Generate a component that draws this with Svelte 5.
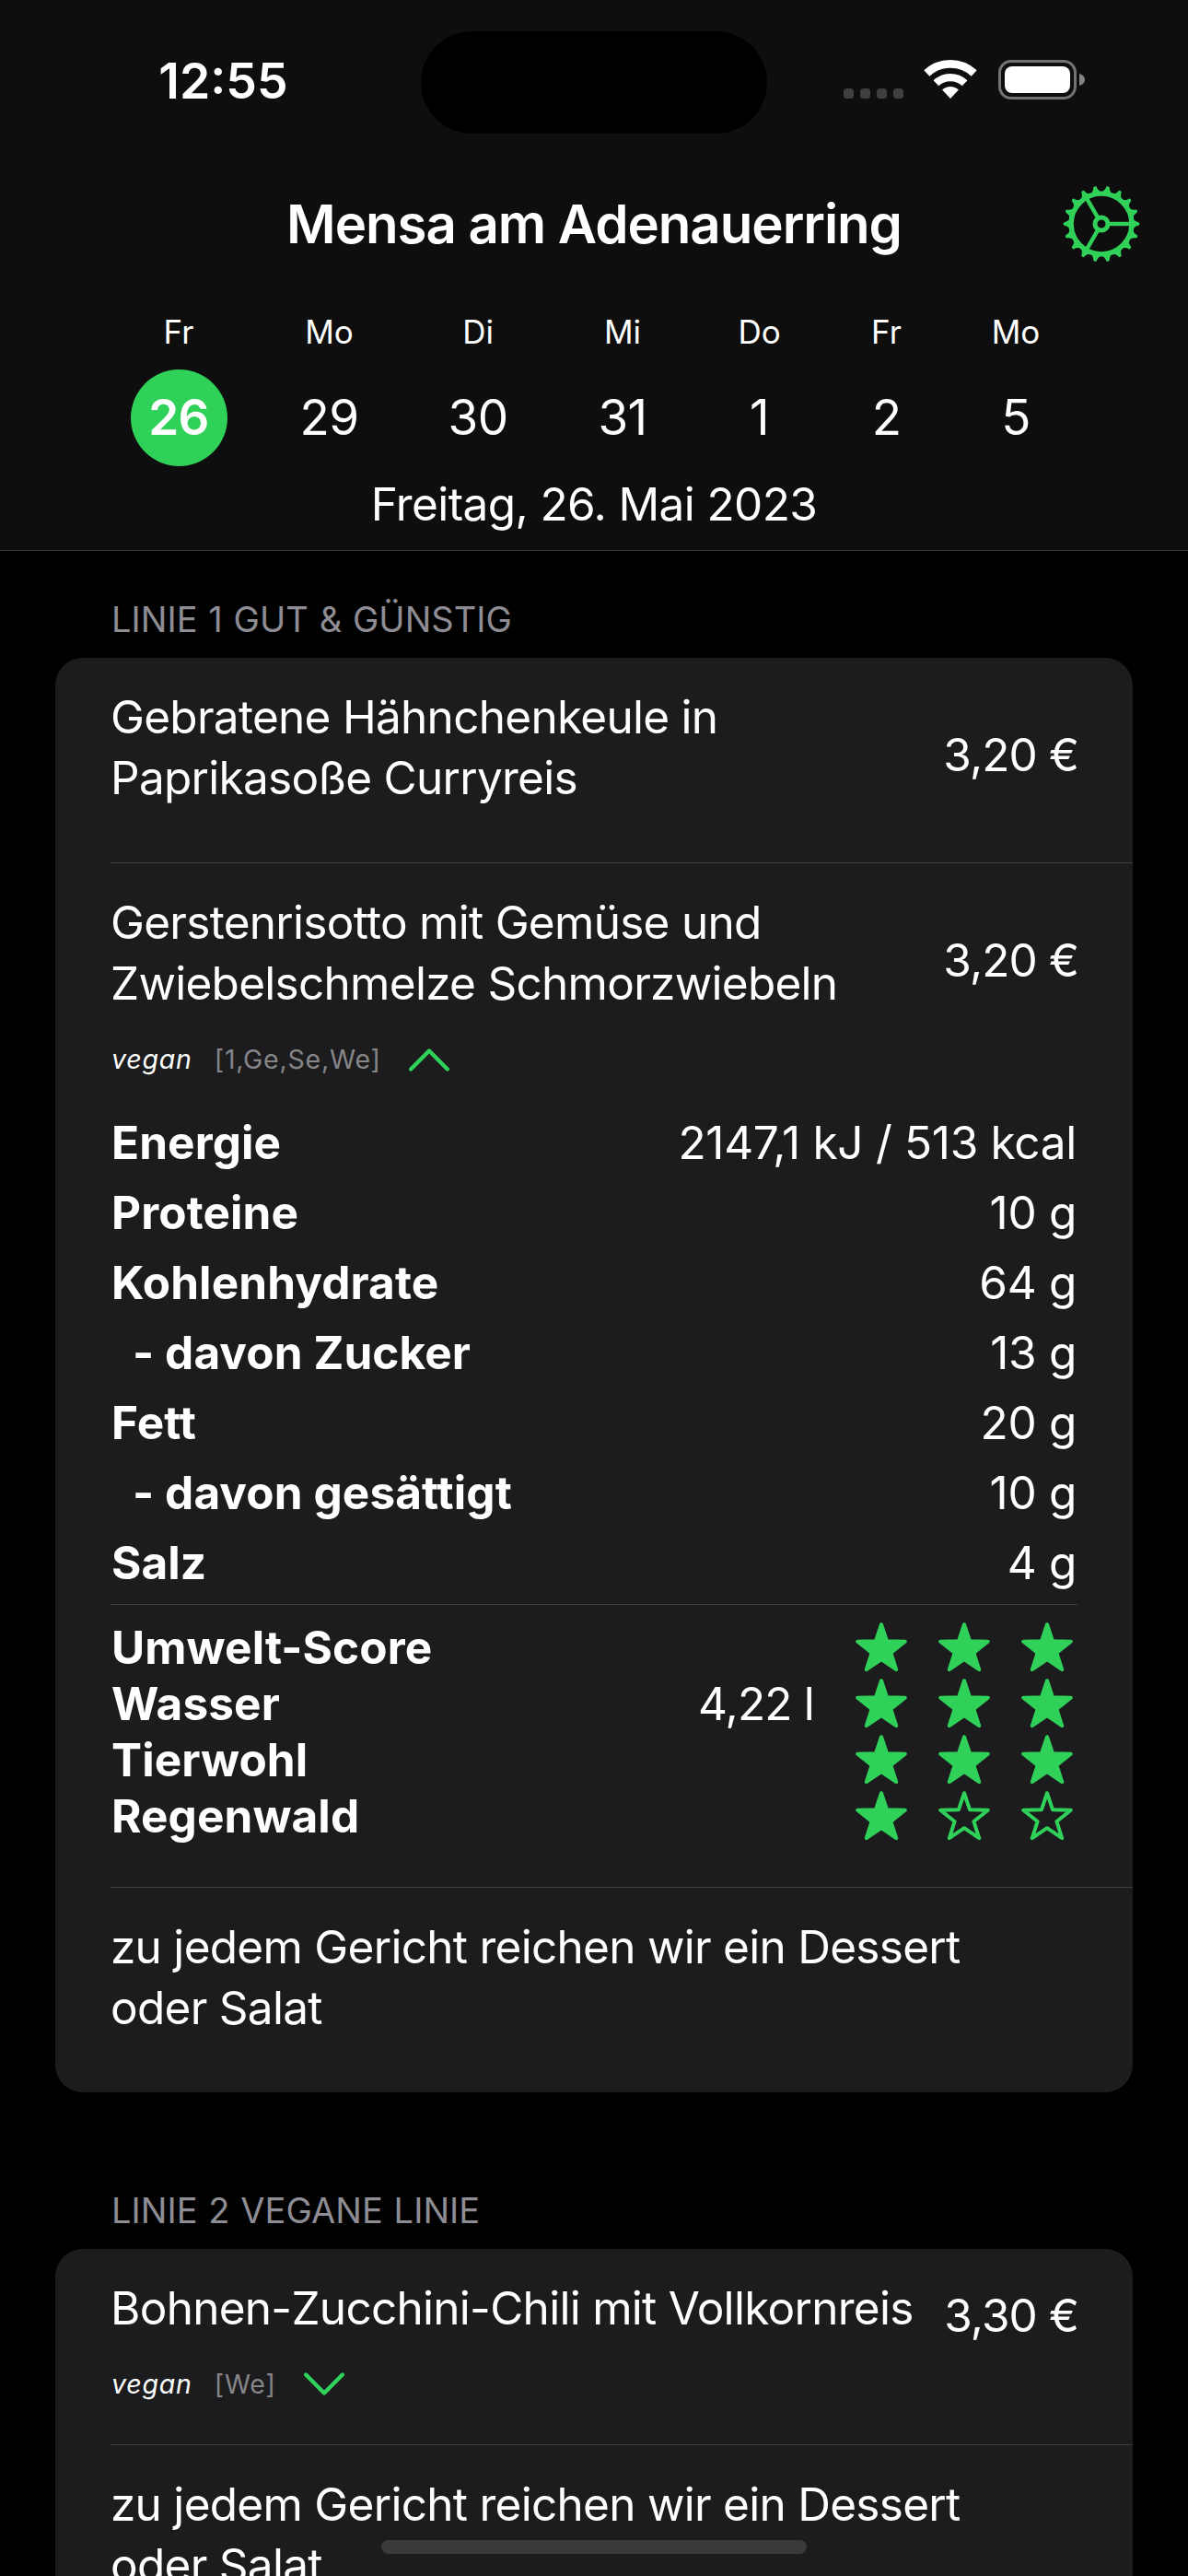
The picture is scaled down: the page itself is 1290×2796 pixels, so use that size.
<script>
  const days = [
    { name: 'Fr', num: '26', active: true },
    { name: 'Mo', num: '29' },
    { name: 'Di', num: '30' },
    { name: 'Mi', num: '31' },
    { name: 'Do', num: '1' },
    { name: 'Fr', num: '2' },
    { name: 'Mo', num: '5' }
  ];

  const note = { title: 'zu jedem Gericht reichen wir ein Dessert\noder Salat' };

  const lines = [
    {
      name: 'LINIE 1 GUT & GÜNSTIG',
      meals: [
        { title: 'Gebratene Hähnchenkeule in\nPaprikasoße Curryreis', price: '3,20 €' },
        {
          title: 'Gerstenrisotto mit Gemüse und\nZwiebelschmelze Schmorzwiebeln',
          price: '3,20 €',
          tag: 'vegan',
          allergens: '[1,Ge,Se,We]',
          open: true,
          nutrition: [
            ['Energie', '2147,1 kJ / 513 kcal'],
            ['Proteine', '10 g'],
            ['Kohlenhydrate', '64 g'],
            ['- davon Zucker', '13 g', true],
            ['Fett', '20 g'],
            ['- davon gesättigt', '10 g', true],
            ['Salz', '4 g']
          ],
          scores: [
            ['Umwelt-Score', '', 3],
            ['Wasser', '4,22 l', 3],
            ['Tierwohl', '', 3],
            ['Regenwald', '', 1]
          ]
        },
        note
      ]
    },
    {
      name: 'LINIE 2 VEGANE LINIE',
      meals: [
        {
          title: 'Bohnen-Zucchini-Chili mit Vollkornreis',
          price: '3,30 €',
          tag: 'vegan',
          allergens: '[We]'
        },
        note
      ]
    }
  ];

  const teeth = Array.from({ length: 18 }, (_, i) => i * 20);
</script>

<div class="screen">
  <header>
    <div class="status">
      <div class="time">12:55</div>
      <div class="island"></div>
      <div class="indicators">
        <div class="dots"><i></i><i></i><i></i><i></i></div>
        <svg class="wifi" viewBox="0 0 58 42" fill="none" stroke="#fff">
          <path d="M3.3 14.5A37.65 37.65 0 0 1 54.7 14.5" stroke-width="8.7" />
          <path d="M13.4 25.3A22.85 22.85 0 0 1 44.6 25.3" stroke-width="8.3" />
          <path d="M29 42L20.1 32.5A13 13 0 0 1 37.9 32.5Z" fill="#fff" stroke="none" />
        </svg>
        <svg class="battery" viewBox="0 0 94 43">
          <rect x="1.5" y="1.5" width="82" height="40" rx="12.5" fill="none" stroke="#737373" stroke-width="3" />
          <rect x="7" y="7" width="71" height="29" rx="8" fill="#fff" />
          <path d="M88 15c3.600 1 6 3.500 6 6.500s-2.400 5.500-6 6.500z" fill="#858585" />
        </svg>
      </div>
    </div>

    <div class="nav">
      <h1>Mensa am Adenauerring</h1>
      <svg class="gear" viewBox="-42 -42 84 84">
        <circle r="32.900" fill="none" stroke="#30d158" stroke-width="5.400" />
        {#each teeth as angle}
          <path
            transform="rotate({angle})"
            d="M33.500 -5.400C36 -4.200 36.800 -2.500 39.400 -2A2 2 0 0 1 39.400 2C36.800 2.500 36 4.200 33.500 5.400Z"
            fill="#30d158"
          />
        {/each}
        <g stroke="#30d158" fill="none">
          <circle r="7" stroke-width="5" />
          {#each [0, 120, 240] as angle}
            <path transform="rotate({angle})" d="M8.500 0H32" stroke-width="4.400" />
          {/each}
        </g>
      </svg>
    </div>

    <div class="days">
      {#each days as day}
        <div class="day">
          <span class="name">{day.name}</span>
          <span class="num" class:active={day.active}>{day.num}</span>
        </div>
      {/each}
    </div>
    <div class="date">Freitag, 26. Mai 2023</div>
  </header>

  <main>
    {#each lines as line}
      <section>
        <h2>{line.name}</h2>
        <div class="card">
          {#each line.meals as meal}
            <article>
              <div class="head">
                <div class="title">{meal.title}</div>
                {#if meal.price}<div class="price">{meal.price}</div>{/if}
              </div>
              {#if meal.tag}
                <div class="tags">
                  <em>{meal.tag}</em>
                  <span>{meal.allergens}</span>
                  <svg viewBox="0 0 44 26" class="chevron" class:up={meal.open}>
                    <path d="M2.200 2.500L22 22.500L41.800 2.500" />
                  </svg>
                </div>
              {:else}
                <div class="spacer"></div>
              {/if}
              {#if meal.nutrition}
                <div class="nutrition">
                  {#each meal.nutrition as [label, value, sub]}
                    <div class="fact"><b class:sub>{label}</b><span>{value}</span></div>
                  {/each}
                </div>
                <div class="scores">
                  {#each meal.scores as [label, value, stars]}
                    <div class="score">
                      <b>{label}</b>
                      <span>{value}</span>
                      <div class="stars">
                        {#each [1, 2, 3] as n}
                          <svg viewBox="0 0 56 54" class:empty={n > stars}>
                            <path
                              d="M28 2.200L34 20.200L53.800 20.700L38.400 33L44.200 51.200L28 40.200L11.800 51.200L17.600 33L2.200 20.700L22 20.200Z"
                            />
                          </svg>
                        {/each}
                      </div>
                    </div>
                  {/each}
                </div>
              {/if}
            </article>
          {/each}
        </div>
      </section>
    {/each}
  </main>
  <div class="home"></div>
</div>

<style>
  :global(body) {
    background: #000;
  }
  .screen {
    position: relative;
    width: 1290px;
    height: 2796px;
    overflow: hidden;
    background: #000;
    color: #fff;
    font-family: Inter, 'Liberation Sans', sans-serif;
    font-size: 49.5px;
    line-height: 66px;
    letter-spacing: -0.3px;
    white-space: nowrap;
  }
  header {
    box-sizing: border-box;
    height: 598px;
    background: #0e0e0e;
    border-bottom: 1px solid #3a3a3b;
  }

  .status {
    display: grid;
    grid-template-columns: 457px 376px 1fr;
    padding-top: 34px;
    height: 111px;
  }
  .time {
    padding: 21px 0 0 28px;
    text-align: center;
    font-size: 53.5px;
    font-weight: 600;
    letter-spacing: 0;
  }
  .island {
    height: 111px;
    border-radius: 56px;
    background: #000;
  }
  .indicators {
    display: flex;
    align-items: flex-end;
    height: 74px;
    padding-left: 83px;
  }
  .dots {
    display: flex;
    gap: 7px;
    padding-bottom: 1px;
    margin-right: 22px;
  }
  .dots i {
    width: 11px;
    height: 11px;
    border-radius: 3.5px;
    background: #3f3f3f;
  }
  .wifi {
    width: 58px;
    height: 42px;
    margin: 0 23px 1px 0;
  }
  .battery {
    width: 94px;
    height: 43px;
  }

  .nav {
    position: relative;
    display: flex;
    justify-content: center;
    padding-top: 64px;
  }
  h1 {
    margin: 0;
    font-size: 58.2px;
    line-height: 68px;
    font-weight: 600;
    letter-spacing: -1.05px;
  }
  .gear {
    position: absolute;
    right: 52px;
    top: 56px;
    width: 84px;
    height: 84px;
  }

  .days {
    display: grid;
    grid-template-columns: 168px 159px 164px 150px 147px 129px 152px;
    padding: 59px 0 0 110px;
  }
  .day {
    display: flex;
    flex-direction: column;
    align-items: center;
  }
  .name {
    font-size: 35px;
    line-height: 48px;
    letter-spacing: 0;
  }
  .num {
    width: 105px;
    height: 105px;
    margin-top: 17px;
    border-radius: 50%;
    text-align: center;
    font-size: 53px;
    line-height: 105px;
    letter-spacing: -0.6px;
  }
  .num.active {
    background: #30d158;
    font-weight: 600;
  }
  .date {
    margin-top: 8px;
    text-align: center;
    letter-spacing: -0.6px;
  }

  section {
    padding: 50px 60px 0;
  }
  section + section {
    padding-top: 104px;
  }
  h2 {
    margin: 0 0 18px 61px;
    font-size: 38px;
    line-height: 48px;
    font-weight: 400;
    letter-spacing: 0.05px;
    word-spacing: 1px;
    color: #8d8d93;
  }
  .card {
    border-radius: 30px;
    background: #1c1c1e;
  }
  article {
    margin-left: 60px;
    padding: 31px 60px 0 0;
  }
  article + article {
    border-top: 1px solid #3d3d40;
  }
  .head {
    display: flex;
    align-items: center;
    justify-content: space-between;
  }
  .title {
    white-space: pre-line;
    letter-spacing: -0.72px;
    font-variant-ligatures: none;
    font-feature-settings: 'calt' 0, 'liga' 0, 'dlig' 0;
  }
  .price {
    margin: 8px -1px -8px 0;
    letter-spacing: -0.9px;
  }
  .spacer {
    height: 59px;
  }
  .tags {
    display: flex;
    align-items: center;
    margin-top: 30px;
    padding: 0 0 45px 1px;
    font-size: 28.5px;
    line-height: 40px;
    letter-spacing: 0.8px;
  }
  .tags span {
    margin: 0 30px 0 24px;
    color: #868689;
  }
  .chevron {
    width: 44px;
    height: 26px;
    fill: none;
    stroke: #30d158;
    stroke-width: 4.4;
    stroke-linecap: round;
    stroke-linejoin: round;
  }
  .chevron.up {
    transform: rotate(180deg);
  }
  b {
    padding-left: 1px;
    font-weight: 700;
    letter-spacing: 0.1px;
    font-variant-ligatures: none;
    font-feature-settings: 'calt' 0, 'liga' 0, 'dlig' 0;
  }
  .nutrition {
    display: grid;
    gap: 10px;
    margin-top: -8px;
    padding-bottom: 12px;
    border-bottom: 1px solid #3d3d40;
  }
  .fact {
    display: flex;
    justify-content: space-between;
    padding-right: 1px;
  }
  .sub {
    padding-left: 24px;
  }
  .scores {
    padding: 15px 0 47px;
  }
  .score {
    display: grid;
    grid-template-columns: 1fr auto 286px;
    height: 61px;
    line-height: 62px;
  }
  .score span {
    letter-spacing: -0.8px;
  }
  .stars {
    display: flex;
    justify-content: flex-end;
    align-items: center;
    gap: 34px;
    height: 61px;
    padding-right: 5px;
  }
  .stars svg {
    width: 56px;
    height: 54px;
    fill: #30d158;
    stroke: #30d158;
    stroke-width: 4;
    stroke-linejoin: round;
  }
  .stars .empty {
    fill: none;
  }
  .home {
    position: absolute;
    left: 414px;
    top: 2757px;
    width: 462px;
    height: 15px;
    border-radius: 8px;
    background: #3a3a3a;
  }
</style>
